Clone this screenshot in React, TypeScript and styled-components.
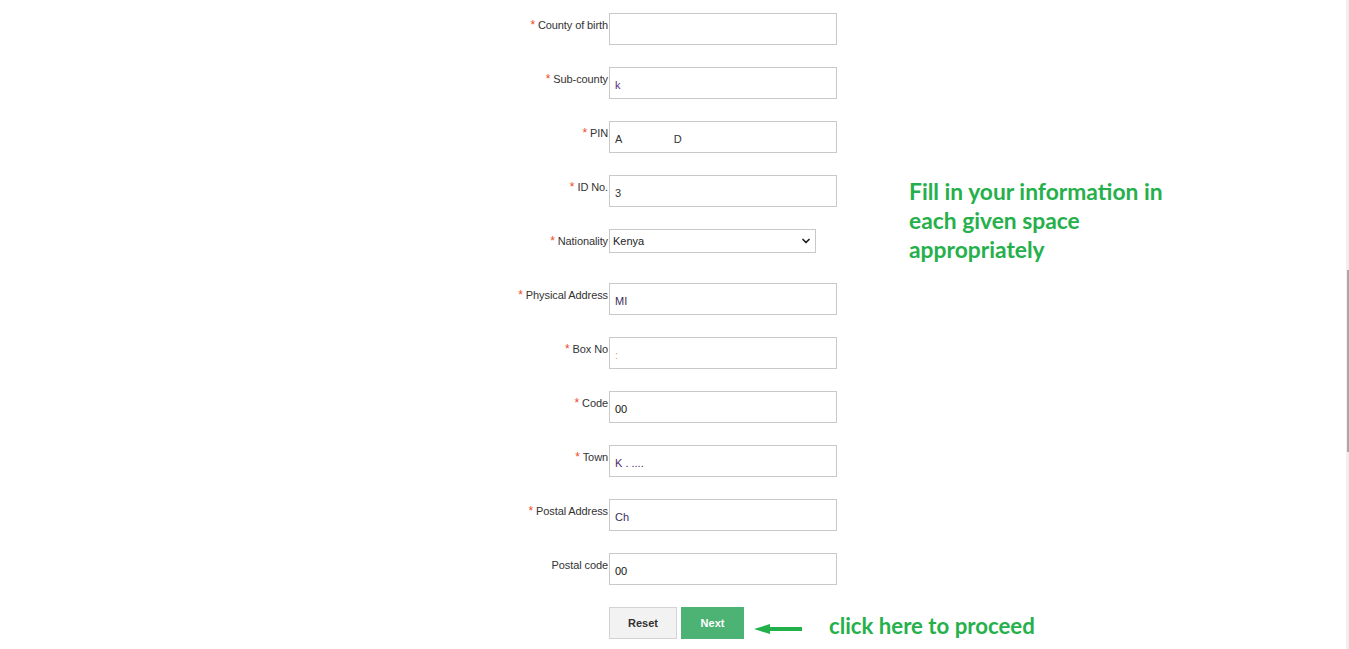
import styled, { createGlobalStyle } from "styled-components";
import { ChevronDown } from "lucide-react";

const GlobalStyle = createGlobalStyle`
  html, body {
    margin: 0;
    padding: 0;
    background: #fff;
  }
  body {
    font-family: "Liberation Sans", Arial, sans-serif;
    overflow: hidden;
  }
`;

const Page = styled.div`
  height: 649px;
  display: flex;
  overflow: hidden;
`;

const Main = styled.main`
  flex: 1;
  display: flex;
  padding: 13px 0 0 498px;
`;

const Form = styled.form`
  display: flex;
  flex-direction: column;
  width: 339px;
  flex: none;
`;

const Row = styled.div`
  height: 54px;
  display: flex;
  align-items: flex-start;
`;

const Label = styled.label`
  width: 110px;
  flex: none;
  text-align: right;
  padding-top: 5px;
  font-size: 11px;
  line-height: 14px;
  color: #333;
  white-space: nowrap;
  letter-spacing: -0.1px;
`;

const Star = styled.span`
  color: #f04a24;
  margin-right: 3px;
  font-size: 12px;
`;

const Input = styled.input<{ $tone?: string }>`
  box-sizing: border-box;
  flex: none;
  width: 228px;
  height: 32px;
  margin: 0 0 0 1px;
  padding: 4px 5px 0;
  border: 1px solid #c9c9c9;
  background: #fff;
  font-family: "Liberation Sans", Arial, sans-serif;
  font-size: 11px;
  color: ${(p) => p.$tone || "#333"};
  outline: none;
  white-space: pre;
`;

const SelectWrap = styled.div`
  position: relative;
  margin-left: 1px;
`;

const Select = styled.select`
  box-sizing: border-box;
  width: 207px;
  height: 24px;
  border: 1px solid #c9c9c9;
  background: #fff;
  padding: 0 3px;
  font-family: "Liberation Sans", Arial, sans-serif;
  font-size: 11px;
  color: #222;
  appearance: none;
  outline: none;
`;

const Chevron = styled.span`
  position: absolute;
  right: 4px;
  top: 6px;
  display: flex;
  color: #222;
  pointer-events: none;
`;

const Actions = styled.div`
  display: flex;
  align-items: flex-start;
  padding-left: 111px;
  gap: 4px;
  white-space: nowrap;
`;

const Button = styled.button<{ $primary?: boolean }>`
  flex: none;
  box-sizing: border-box;
  height: 32px;
  width: ${(p) => (p.$primary ? "63px" : "68px")};
  border: 1px solid ${(p) => (p.$primary ? "#4cb375" : "#d3d3d3")};
  background: ${(p) => (p.$primary ? "#4cb375" : "#f2f2f2")};
  color: ${(p) => (p.$primary ? "#fff" : "#333")};
  font-family: "Liberation Sans", Arial, sans-serif;
  font-weight: bold;
  font-size: 11px;
  cursor: pointer;
`;

const Arrow = styled.svg`
  margin-left: 6px;
  margin-top: 17px;
  flex: none;
`;

const Hint = styled.p`
  margin: 0;
  font-family: Lato, "Open Sans", sans-serif;
  font-weight: 700;
  font-size: 22.8px;
  line-height: 29px;
  color: #25b04b;
  white-space: nowrap;
`;

const ProceedHint = styled(Hint)`
  flex: none;
  margin-left: 23px;
  margin-top: 4px;
  font-size: 22.2px;
`;

const Aside = styled.aside`
  padding: 164px 0 0 72px;
  width: 300px;
`;

const ScrollTrack = styled.div`
  width: 3px;
  background: #efefef;
  display: flex;
  justify-content: center;
`;

const Thumb = styled.div`
  width: 2px;
  height: 182px;
  margin-top: 270px;
  background: #a9a9a9;
`;

type Field = { label: string; value: string; required?: boolean; tone?: string };

const fields: Field[] = [
  { label: "County of birth", value: "", required: true },
  { label: "Sub-county", value: "k", required: true, tone: "#5a2d7a" },
  { label: "PIN", value: "A                 D", required: true },
  { label: "ID No.", value: "3", required: true },
];

const fields2: Field[] = [
  { label: "Physical Address", value: "MI", required: true, tone: "#3d2b5a" },
  { label: "Box No", value: ":", required: true, tone: "#d9a56a" },
  { label: "Code", value: "00", required: true, tone: "#111" },
  { label: "Town", value: "K . ....", required: true, tone: "#4a2d6a" },
  { label: "Postal Address", value: "Ch", required: true, tone: "#3a2f5a" },
  { label: "Postal code", value: "00", tone: "#111" },
];

function FieldRow({ f }: { f: Field }) {
  return (
    <Row>
      <Label>
        {f.required && <Star>*</Star>}
        {f.label}
      </Label>
      <Input readOnly defaultValue={f.value} $tone={f.tone} />
    </Row>
  );
}

export default function App() {
  return (
    <Page>
      <GlobalStyle />
      <Main>
        <Form onSubmit={(e) => e.preventDefault()}>
          {fields.map((f) => (
            <FieldRow key={f.label} f={f} />
          ))}
          <Row>
            <Label>
              <Star>*</Star>Nationality
            </Label>
            <SelectWrap>
              <Select defaultValue="Kenya">
                <option>Kenya</option>
              </Select>
              <Chevron>
                <ChevronDown size={12} strokeWidth={3.5} />
              </Chevron>
            </SelectWrap>
          </Row>
          {fields2.map((f) => (
            <FieldRow key={f.label} f={f} />
          ))}
          <Actions>
            <Button type="button">Reset</Button>
            <Button type="button" $primary>
              Next
            </Button>
            <Arrow width="48" height="10" viewBox="0 0 48 10">
              <polygon points="0,5 16,0 16,3 48,3 48,7 16,7 16,10" fill="#22b04b" />
            </Arrow>
            <ProceedHint>click here to proceed</ProceedHint>
          </Actions>
        </Form>
        <Aside>
          <Hint>
            Fill in your information in
            <br />
            each given space
            <br />
            appropriately
          </Hint>
        </Aside>
      </Main>
      <ScrollTrack>
        <Thumb />
      </ScrollTrack>
    </Page>
  );
}
